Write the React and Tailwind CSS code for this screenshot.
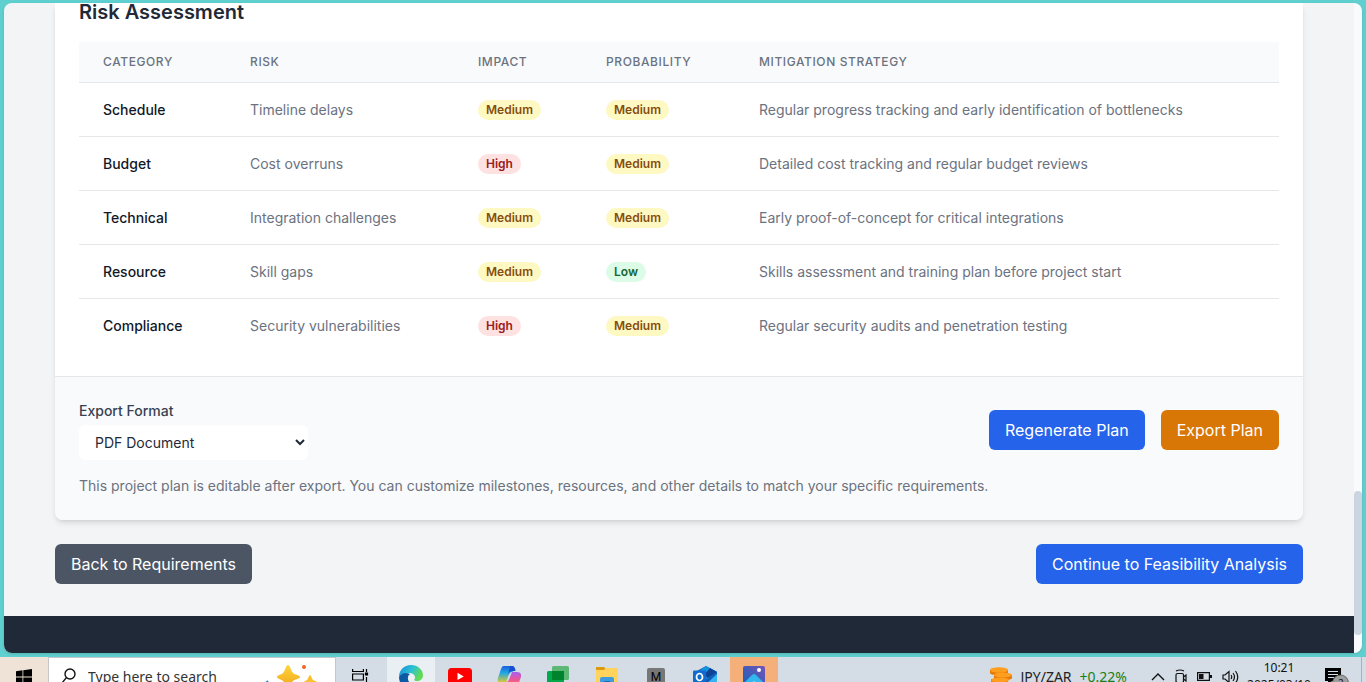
const risks = [
  ['Schedule', 'Timeline delays', 'Medium', 'Medium', 'Regular progress tracking and early identification of bottlenecks'],
  ['Budget', 'Cost overruns', 'High', 'Medium', 'Detailed cost tracking and regular budget reviews'],
  ['Technical', 'Integration challenges', 'Medium', 'Medium', 'Early proof-of-concept for critical integrations'],
  ['Resource', 'Skill gaps', 'Medium', 'Low', 'Skills assessment and training plan before project start'],
  ['Compliance', 'Security vulnerabilities', 'High', 'Medium', 'Regular security audits and penetration testing'],
];

const levelStyles = {
  High: 'bg-[#fee2e2] text-[#991b1b]',
  Medium: 'bg-[#fef9c3] text-[#854d0e]',
  Low: 'bg-[#dcfce7] text-[#166534]',
};

function Level({ value }) {
  return (
    <span className={`inline-flex rounded-full px-2 text-xs leading-5 font-semibold ${levelStyles[value]}`}>
      {value}
    </span>
  );
}

function RiskTable() {
  const th = 'px-6 py-3 text-left text-xs font-medium tracking-wider uppercase';
  return (
    <table className="w-full table-fixed border-collapse text-sm text-[#6b7280]">
      <thead className="bg-[#f9fafb]">
        <tr className="border-b border-[#e5e7eb]">
          <th scope="col" className={`${th} w-[147px]`}>Category</th>
          <th scope="col" className={`${th} w-[228px]`}>Risk</th>
          <th scope="col" className={`${th} w-[128px]`}>Impact</th>
          <th scope="col" className={`${th} w-[153px]`}>Probability</th>
          <th scope="col" className={th}>Mitigation Strategy</th>
        </tr>
      </thead>
      <tbody className="divide-y divide-[#e5e7eb]">
        {risks.map(([category, risk, impact, probability, strategy]) => (
          <tr key={category} className="h-[54px] whitespace-nowrap">
            <td className="px-6 font-medium text-[#111827]">{category}</td>
            <td className="px-6">{risk}</td>
            <td className="px-6"><Level value={impact} /></td>
            <td className="px-6"><Level value={probability} /></td>
            <td className="px-6">{strategy}</td>
          </tr>
        ))}
      </tbody>
    </table>
  );
}

function ActionButton({ color, children }) {
  return (
    <button type="button" className={`rounded-md px-4 py-2 text-base text-white ${color}`}>
      {children}
    </button>
  );
}

function Page() {
  return (
    <div className="flex-1 bg-[#f3f4f6]">
      <main className="mx-auto max-w-7xl px-4 pb-8">
        <section className="overflow-hidden rounded-b-lg bg-white shadow-md">
          <div className="px-6 pb-[23px]">
            <h2 className="pb-5 text-xl leading-[19px] font-semibold text-[#1f2937]">Risk Assessment</h2>
            <RiskTable />
          </div>
          <div className="border-t border-[#e5e7eb] bg-[#f9fafb] p-6">
            <div className="flex items-center justify-between">
              <div className="flex flex-col gap-1">
                <label htmlFor="format" className="text-sm font-medium text-[#374151]">Export Format</label>
                <select id="format" className="w-[229px] rounded-md bg-white py-2 pr-10 pl-3 text-sm text-[#1f2937]">
                  <option>PDF Document</option>
                </select>
              </div>
              <div className="flex gap-4">
                <ActionButton color="bg-[#2563eb]">Regenerate Plan</ActionButton>
                <ActionButton color="bg-[#d97706]">Export Plan</ActionButton>
              </div>
            </div>
            <p className="mt-4 text-sm text-[#6b7280]">
              This project plan is editable after export. You can customize milestones, resources, and other details to match your specific requirements.
            </p>
          </div>
        </section>
        <div className="mt-6 flex justify-between">
          <ActionButton color="bg-[#4b5563]">Back to Requirements</ActionButton>
          <ActionButton color="bg-[#2563eb]">Continue to Feasibility Analysis</ActionButton>
        </div>
      </main>
      <footer className="h-[37px] bg-[#1f2937]" />
    </div>
  );
}

function StartIcon() {
  return (
    <svg width="16" height="16" viewBox="0 0 16 16" aria-hidden="true">
      <path d="M0 2.2 6.5 1.3V7.5H0ZM7.3 1.2 16 0V7.5H7.3ZM0 8.4H6.5V14.6L0 13.7ZM7.3 8.4H16V16L7.3 14.8Z" fill="#000" />
    </svg>
  );
}

function SearchIcon() {
  return (
    <svg width="16" height="17" viewBox="0 0 16 17" fill="none" stroke="#111" strokeWidth="1.4" aria-hidden="true">
      <circle cx="9" cy="6" r="5" />
      <path d="M5.4 9.6 1 15" />
    </svg>
  );
}

function SparklesIcon() {
  return (
    <svg width="58" height="32" viewBox="0 0 58 32" className="shrink-0" aria-hidden="true">
      <defs>
        <linearGradient id="gold" x1="0" y1="0" x2="0" y2="1">
          <stop offset="0" stopColor="#ffd43a" />
          <stop offset="1" stopColor="#f0a51a" />
        </linearGradient>
      </defs>
      <path d="M26 4C28 4 29 10 31 12S38 14 38 16 33 18 31 20 28 28 26 28 23 22 21 20 15 18 15 16 19 14 21 12 24 4 26 4Z" fill="url(#gold)" />
      <path d="M48 14C49 14 50 18 51 19S55 20 55 21 51 22 50 23 49 28 48 28 46 24 45 23 42 22 42 21 44 20 45 19 47 14 48 14Z" fill="#fbc02d" />
      <circle cx="42" cy="6" r="2" fill="#f26522" />
      <path d="M4 22 6 20" stroke="#2386d9" strokeWidth="2" />
    </svg>
  );
}

function TaskViewIcon() {
  return (
    <svg width="17" height="18" viewBox="0 0 17 18" fill="none" stroke="#000" strokeWidth="1.2" aria-hidden="true">
      <path d="M.6 1V3.5H11.4V1M.6 17V14.5H11.4V17M.6 6H11.4V12H.6ZM14.5 1V4M14.5 9V17" />
      <path d="M13.500 5H15.500V7H13.500Z" fill="#000" />
    </svg>
  );
}

function EdgeIcon() {
  return (
    <svg width="24" height="24" viewBox="0 0 24 24" aria-hidden="true">
      <defs>
        <linearGradient id="edgeTop" x1="0" y1="0" x2="1" y2=".4">
          <stop offset="0" stopColor="#1689d8" />
          <stop offset=".55" stopColor="#2cc0d5" />
          <stop offset="1" stopColor="#62db52" />
        </linearGradient>
      </defs>
      <path d="M0 12C0 5 5 0 12 0S24 5 24 10C24 14 21 16 18 16S14 14 15 12C16 9 13 8 10 8 5 8 1 10 0 12Z" fill="url(#edgeTop)" />
      <path d="M0 12C2 8 7 7 11 9 8 11 8 16 12 19 15 21 19 20 22 18 19 23 16 24 12 24 5 24 0 19 0 12Z" fill="#0c59a4" />
      <circle cx="13" cy="12.5" r="3" fill="#eef2f5" />
    </svg>
  );
}

function YouTubeIcon() {
  return (
    <svg width="24" height="17" viewBox="0 0 24 17" aria-hidden="true">
      <rect width="24" height="17" rx="3.5" fill="#f00" />
      <path d="M9.5 4.8 15.8 8.4 9.5 12Z" fill="#fff" />
    </svg>
  );
}

function CopilotIcon() {
  return (
    <svg width="24" height="22" viewBox="0 0 24 22" aria-hidden="true">
      <defs>
        <linearGradient id="coA" x1="0" y1="0" x2="0" y2="1">
          <stop offset="0" stopColor="#1b5de0" />
          <stop offset=".4" stopColor="#1ea6e5" />
          <stop offset="1" stopColor="#e5ce29" />
        </linearGradient>
        <linearGradient id="coB" x1="0" y1="0" x2="0" y2="1">
          <stop offset="0" stopColor="#a660ee" />
          <stop offset=".5" stopColor="#f05695" />
          <stop offset="1" stopColor="#f69447" />
        </linearGradient>
      </defs>
      <path d="M7 0H15C17 0 18 2 18.5 4L15 6C13 6 12 8 11 11L9 17H4C1 17 0 15 1 12L4 3C5 1 5 0 7 0Z" fill="url(#coA)" />
      <path d="M17 22H9C7 22 6 20 6 18L9 16C11 16 12 14 13 11L15 6H20C23 6 25 8 24 11L21 19C20 21 19 22 17 22Z" fill="url(#coB)" />
      <path d="M13 0H15C17 0 18 2 18.5 5H16C13 5 12 6 11 9Z" fill="#1850cf" />
    </svg>
  );
}

function GreenSquaresIcon() {
  return (
    <svg width="22" height="22" viewBox="0 0 22 22" aria-hidden="true">
      <rect x="5" width="17" height="14" rx="1.5" fill="#5cb874" />
      <rect y="5" width="17" height="17" rx="1.5" fill="#00a94b" />
      <path d="M5 5H17V14H5Z" fill="#00832d" />
    </svg>
  );
}

function FolderIcon() {
  return (
    <svg width="22" height="19" viewBox="0 0 22 19" aria-hidden="true">
      <path d="M0 0H8L10 2V5H0Z" fill="#dc9b0b" />
      <path d="M0 3H8L10 1H22V19H0Z" fill="#ffd35c" />
      <path d="M4 19V12Q4 10 6 10H16Q18 10 18 12V19Z" fill="#3d9be0" />
      <path d="M8 14H14V16H8Z" fill="#176eb7" />
    </svg>
  );
}

function OutlookIcon() {
  return (
    <svg width="24" height="22" viewBox="0 0 24 22" aria-hidden="true">
      <path d="M2 6 13 0 24 6V20Q24 22 22 22H4Q2 22 2 20Z" fill="#0f5cbb" />
      <path d="M13 0 24 6 14 13 5 6Z" fill="#1493df" />
      <path d="M17 2 24 6 15 12 11 9Z" fill="#0d4296" />
      <path d="M24 8V21H10Z" fill="#34b5f1" />
      <rect y="4.5" width="13" height="13" rx="1" fill="#0f6cce" />
      <ellipse cx="6.5" cy="11" rx="3" ry="3.5" fill="none" stroke="#fff" strokeWidth="1.7" />
    </svg>
  );
}

function PhotosIcon() {
  return (
    <svg width="22" height="22" viewBox="0 0 22 22" aria-hidden="true">
      <defs>
        <linearGradient id="sky" x1="0" y1="1" x2="1" y2="0">
          <stop offset="0" stopColor="#1261bd" />
          <stop offset="1" stopColor="#7654b4" />
        </linearGradient>
      </defs>
      <rect width="22" height="22" rx="2" fill="url(#sky)" />
      <path d="M0 18 9 9Q11 7 13 9L22 18V20Q22 22 20 22H2Q0 22 0 20Z" fill="#31b8ec" />
      <path d="M5 22 11 15 18 22Z" fill="#bceeff" />
      <circle cx="16" cy="4" r="2" fill="#fff" />
    </svg>
  );
}

function CoinsIcon() {
  return (
    <svg width="22" height="20" viewBox="0 0 22 20" aria-hidden="true">
      <g fill="#e57a0a">
        <path d="M0 3V6C0 9 18 9 18 6V3ZM4 8V11C4 14 22 14 22 11V8ZM1 12V16C1 19 18 19 18 16V12Z" />
      </g>
      <g fill="#ff9d1e">
        <ellipse cx="10" cy="13" rx="9" ry="2.5" />
        <ellipse cx="13" cy="8" rx="9" ry="2.5" />
        <ellipse cx="9" cy="3" rx="9" ry="2.7" />
      </g>
    </svg>
  );
}

function ChevronIcon() {
  return (
    <svg width="14" height="8" viewBox="0 0 14 8" fill="none" stroke="#111" strokeWidth="1.4" aria-hidden="true">
      <path d="M1 7 7 1 13 7" />
    </svg>
  );
}

function MeetIcon() {
  return (
    <svg width="12" height="16" viewBox="0 0 12 16" fill="none" stroke="#111" strokeWidth="1.2" aria-hidden="true">
      <path d="M1 2Q5 0 9 2" />
      <rect x="1" y="4.5" width="7.500" height="9" rx="1.5" />
      <path d="M8.500 8 11 6V12L8.500 10" />
    </svg>
  );
}

function BatteryIcon() {
  return (
    <svg width="15" height="9" viewBox="0 0 15 9" aria-hidden="true">
      <path d="M.6.6H12.4V8.4H.6Z" fill="none" stroke="#111" strokeWidth="1.2" />
      <path d="M2 2H6.5V7H2ZM13 3H15V6H13Z" fill="#111" />
    </svg>
  );
}

function VolumeIcon() {
  return (
    <svg width="17" height="14" viewBox="0 0 17 14" fill="none" stroke="#111" strokeWidth="1.2" aria-hidden="true">
      <path d="M1 5H3L7 1.5V12.5L3 9H1ZM9 5Q10.5 7 9 9M11 3Q14 7 11 11M13.5 1Q18 7 13.5 13" />
    </svg>
  );
}

function NoticeIcon() {
  return (
    <svg width="26" height="22" viewBox="0 0 26 22" aria-hidden="true">
      <path d="M0 0H16V13H7L3 17V13H0Z" fill="#000" />
      <path d="M3 3.5H13M3 6.5H13M3 9.5H9" stroke="#d5dce6" strokeWidth="1" />
      <circle cx="15.5" cy="15" r="8" fill="#9c9ea0" stroke="#55585c" strokeWidth=".8" />
      <text x="13" y="19" fontSize="10" fill="#111" fontFamily="Open Sans">2</text>
    </svg>
  );
}

function TaskButton({ label, tone = '', children }) {
  return (
    <button type="button" aria-label={label} className={`flex h-10 w-12 items-center justify-center ${tone}`}>
      {children}
    </button>
  );
}

function Taskbar() {
  return (
    <div className="flex h-10 shrink-0 items-center justify-between bg-[#d4dce5] font-['Noto_Sans','Open_Sans',sans-serif] text-sm text-[#222]">
      <div className="flex items-center">
        <TaskButton label="Start" tone="bg-[#efe3d8]"><StartIcon /></TaskButton>
        <label className="flex h-10 w-[288px] items-center gap-2 border border-[#c4c7ca] bg-white pl-3">
          <SearchIcon />
          <input type="text" aria-label="Search" placeholder="Type here to search" className="w-[169px] min-w-0 bg-transparent pl-[3px] placeholder:text-[#333]" />
          <SparklesIcon />
        </label>
        <div className="flex">
          <TaskButton label="Task view"><TaskViewIcon /></TaskButton>
          <div className="flex gap-px pl-[3px]">
            <TaskButton label="Edge" tone="bg-[#eaeff3]"><EdgeIcon /></TaskButton>
            <TaskButton label="YouTube"><YouTubeIcon /></TaskButton>
            <TaskButton label="Copilot"><CopilotIcon /></TaskButton>
            <TaskButton label="Meetings"><GreenSquaresIcon /></TaskButton>
            <TaskButton label="Files"><FolderIcon /></TaskButton>
            <TaskButton label="M">
              <span className="flex size-[18px] items-center justify-center rounded-xs bg-[#777] font-['Roboto',sans-serif] text-xs text-black">M</span>
            </TaskButton>
            <TaskButton label="Outlook"><OutlookIcon /></TaskButton>
            <TaskButton label="Photos" tone="bg-[#f5b07a]"><PhotosIcon /></TaskButton>
          </div>
        </div>
      </div>
      <div className="flex items-center">
        <div className="flex items-center gap-2 pr-6">
          <CoinsIcon />
          <span>JPY/ZAR</span>
          <span className="text-[#168016]">+0.22%</span>
        </div>
        <div className="flex items-center gap-2.5 pr-1">
          <ChevronIcon />
          <MeetIcon />
          <BatteryIcon />
          <VolumeIcon />
        </div>
        <div className="w-[72px] self-start pt-0.5 text-center text-xs leading-[17px] text-[#111]">
          <div>10:21</div>
          <div>2025/03/10</div>
        </div>
        <div className="mr-1 flex h-10 items-center border-r border-[#a9b0b8] pt-1 pr-2.5 pl-2.5"><NoticeIcon /></div>
      </div>
    </div>
  );
}

export default function App() {
  return (
    <div className="flex h-screen flex-col overflow-hidden bg-[#5fd0cf] font-['Inter',sans-serif]">
      <div className="shrink-0 px-1 pt-[3px] pb-1">
        <div className="flex overflow-hidden rounded-lg shadow-sm">
          <Page />
          <div className="flex w-2 flex-col justify-end bg-[#f8fafc] pb-[18px]">
            <div className="h-36 rounded-full bg-[#cbd5e1]" />
          </div>
        </div>
      </div>
      <Taskbar />
    </div>
  );
}
